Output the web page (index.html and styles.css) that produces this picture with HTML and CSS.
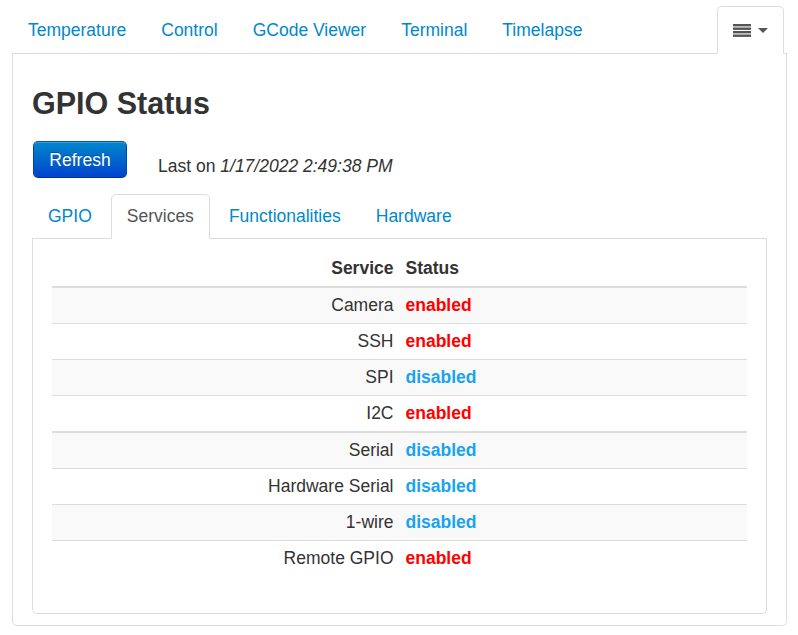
FILE: index.html
```html
<!DOCTYPE html>
<html lang="en">
<head>
<meta charset="utf-8">
<title>GPIO Status</title>
<link rel="stylesheet" href="styles.css">
</head>
<body>
<div class="page">
  <ul class="tabs top-tabs">
    <li><a href="#">Temperature</a></li>
    <li><a href="#">Control</a></li>
    <li><a href="#">GCode Viewer</a></li>
    <li><a href="#">Terminal</a></li>
    <li><a href="#">Timelapse</a></li>
    <li class="menu-tab active"><a href="#">
      <svg class="list-icon" width="18" height="13" viewBox="0 0 18 13"><rect x="0" y="0" width="18" height="2.4"/><rect x="0" y="3.5" width="18" height="2.4"/><rect x="0" y="7" width="18" height="2.4"/><rect x="0" y="10.5" width="18" height="2.4"/></svg>
      <span class="caret"></span>
    </a></li>
  </ul>
  <div class="main">
    <h2 class="title">GPIO Status</h2>
    <div class="toolbar">
      <button class="btn-primary">Refresh</button>
      <span class="last-on">Last on <em>1/17/2022 2:49:38 PM</em></span>
    </div>
    <ul class="tabs sub-tabs">
      <li><a href="#">GPIO</a></li>
      <li class="active"><a href="#">Services</a></li>
      <li><a href="#">Functionalities</a></li>
      <li><a href="#">Hardware</a></li>
    </ul>
    <div class="tab-content">
      <table class="table">
        <thead>
          <tr><th class="name">Service</th><th>Status</th><th class="filler"></th></tr>
        </thead>
        <tbody>
          <tr class="odd"><td class="name">Camera</td><td class="on">enabled</td><td></td></tr>
          <tr><td class="name">SSH</td><td class="on">enabled</td><td></td></tr>
          <tr class="odd"><td class="name">SPI</td><td class="off">disabled</td><td></td></tr>
          <tr><td class="name">I2C</td><td class="on">enabled</td><td></td></tr>
        </tbody>
        <tbody>
          <tr class="odd"><td class="name">Serial</td><td class="off">disabled</td><td></td></tr>
          <tr><td class="name">Hardware Serial</td><td class="off">disabled</td><td></td></tr>
          <tr class="odd"><td class="name">1-wire</td><td class="off">disabled</td><td></td></tr>
          <tr><td class="name">Remote GPIO</td><td class="on">enabled</td><td></td></tr>
        </tbody>
      </table>
    </div>
  </div>
</div>
</body>
</html>
```
FILE: styles.css
```css
* { box-sizing: border-box; }
html, body { margin: 0; padding: 0; background: #fff; }
body {
  font-family: "Liberation Sans", Arial, sans-serif;
  font-size: 17.5px;
  color: #333;
}
.page { padding: 6px 11px 0 12px; }

.tabs {
  list-style: none;
  margin: 0;
  padding: 0;
  display: flex;
  border-bottom: 1px solid #ddd;
}
.tabs li { margin-bottom: -1px; margin-right: 3px; }
.tabs a {
  display: flex;
  align-items: center;
  padding: 0 15px;
  border: 1px solid transparent;
  border-radius: 5px 5px 0 0;
  color: #0088cc;
  text-decoration: none;
}
.tabs li.active a {
  color: #555;
  background: #fff;
  border-color: #ddd #ddd transparent #ddd;
}
.top-tabs a { height: 48px; }
.top-tabs .menu-tab { margin-left: auto; margin-right: 3px; }
.top-tabs .menu-tab a { padding: 0 15px 0 15px; }
.list-icon { fill: #555; display: block; }
.caret {
  display: block;
  width: 0; height: 0;
  margin-left: 7px;
  border-left: 5px solid transparent;
  border-right: 5px solid transparent;
  border-top: 5px solid #555;
}

.main {
  border: 1px solid #ddd;
  border-top: none;
  border-radius: 0 0 5px 5px;
  padding: 31px 19px 11px 19px;
}
.title {
  margin: 0;
  font-size: 30.5px;
  line-height: 36px;
  font-weight: bold;
  color: #333;
}
.toolbar {
  margin-top: 20px;
  display: flex;
  align-items: flex-end;
}
.btn-primary {
  font-family: inherit;
  font-size: 17.5px;
  line-height: 23px;
  height: 37px;
  width: 94px;
  margin-left: 1px;
  padding: 7px 0 5px;
  color: #fff;
  text-shadow: 0 -1px 0 rgba(0,0,0,.25);
  background: linear-gradient(to bottom, #0088cc, #0044cc);
  border: 1px solid #0044aa;
  border-color: #0055bb #0044aa #003399;
  border-radius: 5px;
  box-shadow: inset 0 1px 0 rgba(255,255,255,.2);
}
.last-on {
  margin-left: 31px;
  line-height: 25px;
  position: relative;
  top: 1px;
}
.last-on em { font-style: italic; }

.sub-tabs { margin-top: 16px; }
.sub-tabs a { height: 45px; }

.tab-content {
  border: 1px solid #ddd;
  border-top: none;
  border-radius: 0 0 5px 5px;
  padding: 12px 19px 17px 19px;
}
.table {
  width: 100%;
  border-collapse: collapse;
  margin-bottom: 20px;
}
.table th, .table td {
  padding: 8px 6px;
  line-height: 19px;
  text-align: left;
  vertical-align: top;
}
.table th { font-weight: bold; color: #333; }
.table .name { width: 50%; text-align: right; }
.table thead th { border-bottom: 2px solid #ddd; }
.table tbody tr + tr td { border-top: 1px solid #ddd; }
.table tbody + tbody { border-top: 2px solid #ddd; }
.table tr.odd td { background: #f9f9f9; }
.on { color: #ff0000; font-weight: bold; }
.off { color: #1aa3f0; font-weight: bold; }
```
